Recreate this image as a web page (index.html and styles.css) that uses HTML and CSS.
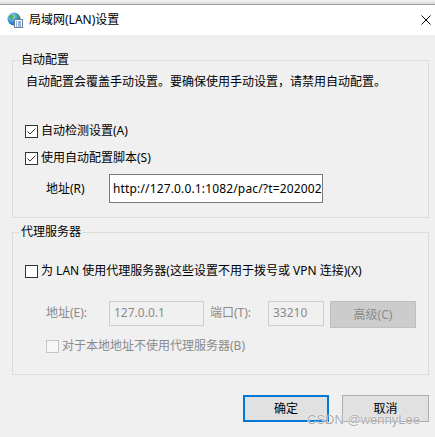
FILE: index.html
```html
<!DOCTYPE html>
<html lang="zh-CN">
<head>
<meta charset="utf-8">
<title>局域网(LAN)设置</title>
<link rel="stylesheet" href="styles.css">
</head>
<body>
<div class="edge"></div>
<header class="titlebar">
  <svg class="app-icon" width="16" height="16" viewBox="0 0 16 16">
    <defs>
      <radialGradient id="globe" cx="0.35" cy="0.3" r="0.8">
        <stop offset="0" stop-color="#a8e0f8"/>
        <stop offset="0.55" stop-color="#2d92d8"/>
        <stop offset="1" stop-color="#135a98"/>
      </radialGradient>
    </defs>
    <circle cx="7" cy="7" r="6.5" fill="url(#globe)"/>
    <path d="M2.2 4.2 C3.5 2.6 5.6 2.4 6.4 3.6 C6.9 4.6 5.6 5.2 5.8 6.4 C5.9 7.4 4.4 7.8 3.6 7 C2.8 6.3 1.8 5.4 2.2 4.2 Z" fill="#56b03c"/>
    <path d="M8.6 2.2 C10.4 2.6 12 3.8 12.6 5.4 C11.4 5.6 10 5 9.4 4.2 C9 3.6 8.4 3 8.6 2.2 Z" fill="#56b03c"/>
    <rect x="7.5" y="7.5" width="8" height="8" fill="#fdfdfd" stroke="#6f7f96"/>
    <path d="M9 10 h1 M11 10 h3 M9 12 h1 M11 12 h3 M9 14 h1 M11 14 h3" stroke="#2e6fc2" stroke-width="1"/>
  </svg>
  <span class="title">局域网(LAN)设置</span>
  <svg class="close" width="10" height="10" viewBox="0 0 10 10">
    <path d="M0.5 0.5 L9.5 9.5 M9.5 0.5 L0.5 9.5" stroke="#000" stroke-width="1"/>
  </svg>
</header>

<main class="content">
  <fieldset class="group group-auto">
    <legend>自动配置</legend>
    <p class="note">自动配置会覆盖手动设置。要确保使用手动设置，请禁用自动配置。</p>
    <div class="check-row row-detect">
      <span class="box"><svg width="11" height="11" viewBox="0 0 11 11"><path d="M1.5 5.5 L4 8 L9.5 2.5" fill="none" stroke="#333" stroke-width="1"/></svg></span>
      <span class="label">自动检测设置(A)</span>
    </div>
    <div class="check-row row-script">
      <span class="box"><svg width="11" height="11" viewBox="0 0 11 11"><path d="M1.5 5.5 L4 8 L9.5 2.5" fill="none" stroke="#333" stroke-width="1"/></svg></span>
      <span class="label">使用自动配置脚本(S)</span>
    </div>
    <div class="field-row row-url">
      <span class="field-label">地址(R)</span>
      <div class="field url">http://127.0.0.1:1082/pac/?t=202002</div>
    </div>
  </fieldset>

  <fieldset class="group group-proxy">
    <legend>代理服务器</legend>
    <div class="check-row row-lan">
      <span class="box"></span>
      <span class="label">为 LAN 使用代理服务器(这些设置不用于拨号或 VPN 连接)(X)</span>
    </div>
    <div class="field-row row-addr">
      <span class="field-label disabled">地址(E):</span>
      <div class="field addr disabled">127.0.0.1</div>
      <span class="field-label port-label disabled">端口(T):</span>
      <div class="field port disabled">33210</div>
      <div class="btn advanced">高级(C)</div>
    </div>
    <div class="check-row row-local">
      <span class="box disabled"></span>
      <span class="label disabled">对于本地地址不使用代理服务器(B)</span>
    </div>
  </fieldset>

  <div class="actions">
    <div class="btn ok">确定</div>
    <div class="btn cancel">取消</div>
  </div>
</main>

<div class="watermark">CSDN @wennyLee</div>
</body>
</html>
```

FILE: styles.css
```css
html, body {
  margin: 0;
  padding: 0;
}

body {
  width: 435px;
  height: 437px;
  overflow: hidden;
  position: relative;
  background: #f0f0f0;
  font-family: "Noto Sans", "Noto Sans CJK SC", sans-serif;
  font-size: 12px;
  line-height: 14px;
  color: #000;
}

.edge {
  height: 5px;
  box-sizing: border-box;
  background: linear-gradient(#f4f4f4, #dadada);
  border-bottom: 1px solid #9a9a9a;
}

.titlebar {
  height: 30px;
  background: #fff;
  display: flex;
  align-items: center;
  padding: 0 4px 0 7px;
}

.app-icon {
  flex: none;
}

.title {
  margin-left: 6px;
  font-size: 12px;
}

.close {
  margin-left: auto;
  flex: none;
}

.content {
  padding: 0 6px 0 12px;
}

.group {
  margin: 0;
  min-width: 0;
  border: 1px solid #dcdcdc;
  padding: 0 0 14px 12px;
}

.group legend {
  padding: 0 1px;
  margin-left: -5px;
  line-height: 14px;
}

.group-auto {
  margin-top: 18px;
}

.group-proxy {
  margin-top: 7px;
  padding-bottom: 21px;
}

.note {
  margin: 8px 0 0 1px;
}

.check-row {
  display: flex;
  align-items: center;
  height: 14px;
}

.box {
  flex: none;
  width: 13px;
  height: 13px;
  box-sizing: border-box;
  border: 1px solid #333;
  background: #fff;
  margin-right: 3px;
  display: flex;
  align-items: center;
  justify-content: center;
}

.box.disabled {
  border-color: #c6c6c6;
  background: #f6f6f6;
}

.disabled {
  color: #8a8a8a;
}

.row-detect {
  margin-top: 35px;
}

.row-script {
  margin-top: 13px;
}

.field-row {
  display: flex;
  padding-left: 21px;
}

.row-url {
  margin-top: 9px;
  align-items: center;
}

.field-label {
  width: 63px;
  flex: none;
}

.field {
  box-sizing: border-box;
  border: 1px solid #7a7a7a;
  background: #fff;
  padding-left: 3px;
  white-space: nowrap;
  overflow: hidden;
  flex: none;
}

.url {
  width: 214px;
  height: 29px;
  line-height: 27px;
  letter-spacing: 0.15px;
}

.row-lan {
  margin-top: 25px;
}

.row-addr {
  margin-top: 23px;
  align-items: flex-start;
}

.row-addr .field-label {
  line-height: 24px;
}

.field.disabled {
  border-color: #cccccc;
  background: #f0f0f0;
  height: 25px;
  line-height: 21px;
  padding-left: 4px;
}

.addr {
  width: 95px;
}

.port-label {
  margin-left: 6px;
  width: 58px;
}

.port {
  width: 56px;
}

.btn {
  box-sizing: border-box;
  height: 27px;
  display: flex;
  align-items: center;
  justify-content: center;
  background: #e1e1e1;
  flex: none;
}

.advanced {
  margin-left: 6px;
  width: 86px;
  background: #cccccc;
  border: 1px solid #bfbfbf;
  color: #8a8a8a;
}

.row-local {
  margin-top: 11px;
  padding-left: 21px;
}

.actions {
  margin-top: 20px;
  display: flex;
  justify-content: flex-end;
  gap: 13px;
}

.ok {
  width: 86px;
  border: 2px solid #0078d7;
}

.cancel {
  width: 87px;
  border: 1px solid #adadad;
}

.watermark {
  position: absolute;
  left: 307px;
  top: 412px;
  font-family: "Liberation Sans", sans-serif;
  font-size: 13px;
  line-height: 16px;
  color: rgba(140, 140, 140, 0.75);
  text-shadow: 0 0 1px #fff, 0 0 1px #fff;
  pointer-events: none;
}
```
